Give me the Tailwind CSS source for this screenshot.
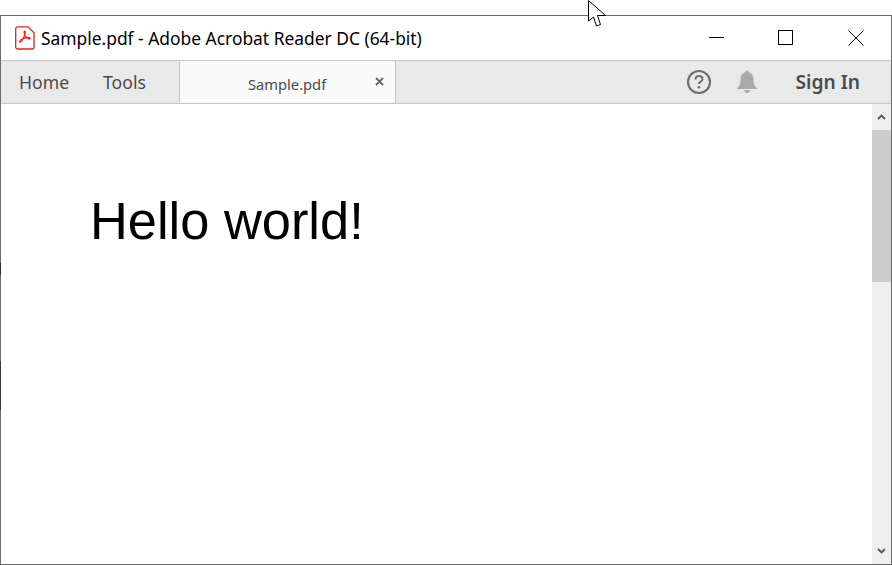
<!DOCTYPE html>
<html lang="en">
<head>
    <meta charset="UTF-8">
    <meta name="viewport" content="width=device-width, initial-scale=1.0">
    <title>Sample.pdf - Adobe Acrobat Reader DC (64-bit)</title>
    <script src="https://cdn.jsdelivr.net/npm/@tailwindcss/browser@4"></script>
</head>
<body class="bg-white h-[565px] w-[892px] overflow-hidden font-['Noto_Sans',sans-serif]">
    <div class="relative pt-[15px] h-[565px]">

        <!-- window -->
        <div class="h-[550px] border border-[#6b6b6b] flex flex-col bg-white">

            <!-- title bar -->
            <div class="h-[44px] flex items-center shrink-0">
                <svg class="ml-[14px] w-[20px] h-[24px]" viewBox="0 0 20 24" fill="none">
                    <path d="M2.500 0.800H13L19 6.800V21a2 2 0 0 1-2 2H2.500A2 2 0 0 1 .7 21V2.800A2 2 0 0 1 2.500 .8Z" stroke="#e8211a" stroke-width="1.300"/>
                    <path d="M9.700 5c-1 0-.6 2.500.2 4.200.9 1.900 2.300 3.300 3.800 3.700 1.300.3 2-.5 1.200-1-1.600-.8-4.700-.2-7.200 1.200C6 13 4.300 15 4.800 15.800c.5.700 1.700-.2 2.500-1.600 1-1.700 2.500-5 2.900-7 .2-1.100.2-2.200-.5-2.200Z" stroke="#e8211a" stroke-width="1.200"/>
                </svg>
                <span class="ml-[6px] text-[17.4px] leading-[22px] text-[#000]">Sample.pdf - Adobe Acrobat Reader DC (64-bit)</span>
                <div class="ml-auto flex items-center">
                    <svg class="w-[16px] h-[16px] mr-[53px]" viewBox="0 0 16 16"><path d="M0 7.500H15" stroke="#000" stroke-width="1"/></svg>
                    <svg class="w-[16px] h-[16px] mr-[54px]" viewBox="0 0 16 16" fill="none"><rect x="0.500" y="0.500" width="14" height="14" stroke="#000"/></svg>
                    <svg class="w-[16px] h-[16px] mr-[27px]" viewBox="0 0 16 16" fill="none"><path d="M0.500 0.500L15.500 15.500M15.500 0.500L0.500 15.500" stroke="#000" stroke-width="1"/></svg>
                </div>
            </div>

            <!-- toolbar -->
            <div class="h-[44px] shrink-0 flex bg-[#e9e9e9] border-y border-[#c6c6c6]">
                <div class="w-[179px] flex items-center border-r border-[#c6c6c6] text-[#4b4b4b] text-[17.6px]">
                    <span class="ml-[18px]">Home</span>
                    <span class="ml-[34px]">Tools</span>
                </div>
                <div class="w-[216px] flex items-center bg-[#fafafa] border-r border-[#c6c6c6] relative">
                    <span class="ml-[68px] text-[14.700px] text-[#4b4b4b] mt-[4px]">Sample.pdf</span>
                    <svg class="absolute right-[11px] top-[16px] w-[9px] h-[9px]" viewBox="0 0 9 9"><path d="M1 1L8 8M8 1L1 8" stroke="#666" stroke-width="1.800"/></svg>
                </div>
                <div class="ml-auto flex items-center">
                    <svg class="w-[26px] h-[26px]" viewBox="0 0 26 26" fill="none">
                        <circle cx="13" cy="13" r="11" stroke="#6e6e6e" stroke-width="2.200"/>
                        <path d="M9.500 10.500c0-2.200 1.600-3.500 3.500-3.500s3.500 1.200 3.500 3c0 2.700-3.500 2.600-3.500 5" stroke="#6e6e6e" stroke-width="2"/>
                        <circle cx="13" cy="18.300" r="1.300" fill="#6e6e6e"/>
                    </svg>
                    <svg class="ml-[24px] w-[22px] h-[24px]" viewBox="0 0 22 24">
                        <path d="M11 0.500c1.100 0 1.700.7 1.700 1.700C16.500 3.300 17.500 6.500 17.500 10c0 4 1.300 6.500 4 9H.500c2.700-2.500 4-5 4-9 0-3.500 1-6.700 4.800-7.800C9.300 1.200 9.900.5 11 .5Z" fill="#aaa"/>
                        <path d="M8 20h6c0 1.500-1.300 3-3 3s-3-1.500-3-3Z" fill="#aaa"/>
                    </svg>
                    <span class="ml-[37px] mr-[31px] text-[19.200px] font-semibold text-[#4b4b4b]">Sign In</span>
                </div>
            </div>

            <!-- document area -->
            <div class="flex-1 flex min-h-0">
                <div class="flex-1 pl-[89px] pt-[82px]">
                    <p class="font-['Liberation_Sans',sans-serif] text-[52.400px] leading-[70px] text-black">Hello world!</p>
                </div>
                <div class="w-[19px] bg-[#efefef] flex flex-col items-center">
                    <div class="h-[26px] flex items-center justify-center shrink-0">
                        <svg class="w-[9px] h-[6px]" viewBox="0 0 9 6" fill="none"><path d="M1 5L4.500 1.500L8 5" stroke="#555" stroke-width="1.800"/></svg>
                    </div>
                    <div class="w-full h-[152px] bg-[#cdcdcd]"></div>
                    <div class="mt-auto h-[26px] flex items-center justify-center shrink-0">
                        <svg class="w-[9px] h-[6px]" viewBox="0 0 9 6" fill="none"><path d="M1 1L4.500 4.500L8 1" stroke="#555" stroke-width="1.800"/></svg>
                    </div>
                </div>
            </div>
        </div>

        <!-- darker spots on the window's left edge -->
        <div class="absolute left-0 top-[263px] w-px h-[12px] bg-[#2e2e2e]"></div>
        <div class="absolute left-0 top-[361px] w-px h-[49px] bg-[#3a3a3a]"></div>

        <!-- mouse cursor over the window -->
        <svg class="absolute left-[588px] top-0 w-[20px] h-[28px]" viewBox="0 0 20 28">
            <path d="M0.500 0.500V21L5.500 17L8.500 26L12.500 24.500L9.500 15.500H17.500Z" fill="#fff" stroke="#000" stroke-width="1"/>
        </svg>
    </div>
</body>
</html>
